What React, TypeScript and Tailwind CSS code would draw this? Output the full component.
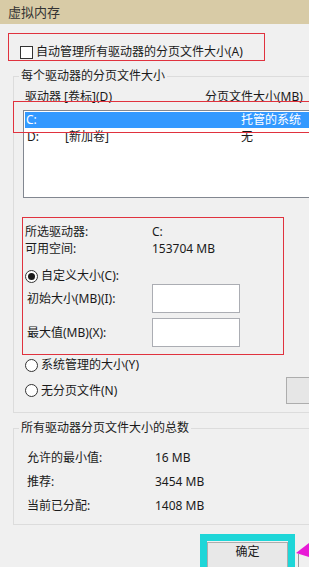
import React from 'react';

const font = "font-['Noto_Sans','Noto_Sans_CJK_SC',sans-serif]";

function Radio({ checked }: { checked?: boolean }) {
  return (
    <span className="w-[13px] h-[13px] rounded-full border border-[#333] bg-white flex items-center justify-center flex-shrink-0">
      {checked && <span className="w-[7px] h-[7px] rounded-full bg-[#1a1a1a]" />}
    </span>
  );
}

export default function App() {
  return (
    <div className={`w-[309px] h-[567px] overflow-hidden bg-[#f0f0f0] text-[12px] leading-[16px] text-[#1a1a1a] ${font} flex flex-col`}>
      {/* title bar */}
      <div className="h-[24px] shrink-0 bg-[#d8cba6] flex items-center pl-[8px] text-[13px] text-[#333]">虚拟内存</div>

      {/* auto manage */}
      <div className="shrink-0 mt-[9px] ml-[8px] w-[257px] h-[28px] border border-[#e0323e] pt-[10px] pl-[11px]">
        <div className="flex items-center gap-[3px] h-[16px]">
          <span className="w-[13px] h-[13px] border border-[#333] bg-white flex-shrink-0" />
          <span>自动管理所有驱动器的分页文件大小(A)</span>
        </div>
      </div>

      {/* per drive group */}
      <fieldset className="mt-[7px] ml-[13px] w-[320px] border border-[#dcdcdc] pb-[8px] shrink-0">
        <legend className="ml-[5px] px-[2px] leading-[16px]">每个驱动器的分页文件大小</legend>

        <div className="relative mt-[5px]">
          <div className="flex h-[16px] items-center pl-[11px]">
            <span className="w-[180px]">驱动器 [卷标](D)</span>
            <span>分页文件大小(MB)</span>
          </div>
          <div className="mt-[5px] ml-[9px] h-[88px] border border-[#828790] bg-white p-[1px]">
            <div className="flex h-[16px] items-center bg-[#3399ff] text-white">
              <span className="pl-[1px] w-[216px]">C:</span>
              <span>托管的系统</span>
            </div>
            <div className="flex h-[17px] items-center">
              <span className="pl-[2px] w-[40px]">D:</span>
              <span className="w-[176px]">[新加卷]</span>
              <span>无</span>
            </div>
          </div>
          <div className="absolute left-[-1px] top-[12px] w-[340px] h-[32px] border border-[#e0323e]" />
        </div>

        <div className="mt-[19px] ml-[8px] w-[262px] h-[138px] border border-[#e0323e] pt-[6px] flex flex-col">
          <div className="flex h-[16px] items-center pl-[2px]">
            <span className="w-[127px]">所选驱动器:</span>
            <span>C:</span>
          </div>
          <div className="flex h-[16px] items-center pl-[2px] mt-[1px]">
            <span className="w-[127px]">可用空间:</span>
            <span>153704 MB</span>
          </div>
          <div className="flex h-[16px] items-center pl-[2px] mt-[11px] gap-[3px]">
            <Radio checked />
            <span>自定义大小(C):</span>
          </div>
          <div className="flex h-[29px] items-center pl-[4px] shrink-0">
            <span className="w-[125px]">初始大小(MB)(I):</span>
            <span className="w-[88px] h-[29px] bg-white border border-[#abadb3]" />
          </div>
          <div className="flex h-[29px] items-center pl-[4px] mt-[5px] shrink-0">
            <span className="w-[125px]">最大值(MB)(X):</span>
            <span className="w-[88px] h-[29px] bg-white border border-[#abadb3]" />
          </div>
        </div>

        <div className="flex h-[16px] items-center ml-[11px] mt-[2px] gap-[3px]">
          <Radio />
          <span>系统管理的大小(Y)</span>
        </div>
        <div className="flex h-[27px] items-center mt-[4px]">
          <div className="w-[272px] flex items-center pl-[11px] gap-[3px]">
            <Radio />
            <span>无分页文件(N)</span>
          </div>
          <span className="w-[75px] h-[27px] bg-[#e6e6e6] border border-[#adadad]" />
        </div>
      </fieldset>

      {/* totals group */}
      <fieldset className="mt-[7px] ml-[13px] w-[320px] border border-[#dcdcdc] pb-[6px] shrink-0">
        <legend className="ml-[5px] px-[2px] leading-[16px]">所有驱动器分页文件大小的总数</legend>
        <div className="mt-[10px] pl-[13px]">
          <div className="flex h-[24px] items-center">
            <span className="w-[128px]">允许的最小值:</span>
            <span>16 MB</span>
          </div>
          <div className="flex h-[24px] items-center">
            <span className="w-[128px]">推荐:</span>
            <span>3454 MB</span>
          </div>
          <div className="flex h-[24px] items-center">
            <span className="w-[128px]">当前已分配:</span>
            <span>1408 MB</span>
          </div>
        </div>
      </fieldset>

      {/* buttons */}
      <div className="relative mt-[9px] flex shrink-0">
        <div className="ml-[200px] w-[95px] h-[40px] border-[7px] border-b-0 border-[#1ed6d8] pt-[1px]">
          <div className="h-[40px] bg-[#e8e8e8] border border-[#adadad] flex justify-center pt-[1px]">确定</div>
        </div>
        <div className="absolute left-[298px] top-[20px] w-[1px] h-[20px] bg-[#9a9a9a]" />
        <svg className="absolute left-[295px] top-[8px]" width="14" height="16" viewBox="0 0 14 16">
          <polygon points="1,11 14,1 14,15" fill="#e81ad6" />
        </svg>
      </div>
    </div>
  );
}
